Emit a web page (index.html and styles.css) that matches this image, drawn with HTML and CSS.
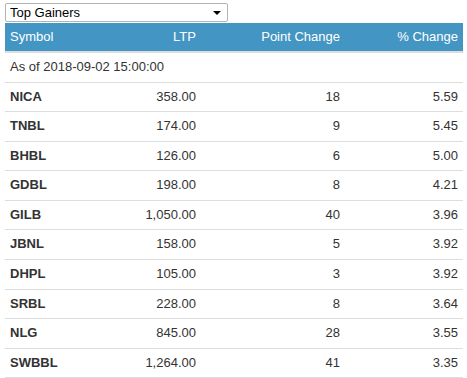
FILE: index.html
```html
<!DOCTYPE html>
<html lang="en">
<head>
  <meta charset="UTF-8" />
  <title>Top Gainers</title>
  <link rel="stylesheet" href="styles.css">
</head>
<body>
  <div class="market-box">
    <div class="select-wrap">
      <select class="market-select">
        <option>Top Gainers</option>
        <option>Top Losers</option>
        <option>Top Turnover</option>
      </select>
    </div>

    <table class="market-table">
      <thead>
        <tr>
          <th class="col-symbol">Symbol</th>
          <th class="col-ltp num">LTP</th>
          <th class="col-point num">Point Change</th>
          <th class="col-pct num">% Change</th>
        </tr>
      </thead>
      <tbody>
        <tr class="as-of">
          <td colspan="4">As of 2018-09-02 15:00:00</td>
        </tr>
        <tr><td class="sym">NICA</td><td class="num">358.00</td><td class="num">18</td><td class="num">5.59</td></tr>
        <tr><td class="sym">TNBL</td><td class="num">174.00</td><td class="num">9</td><td class="num">5.45</td></tr>
        <tr><td class="sym">BHBL</td><td class="num">126.00</td><td class="num">6</td><td class="num">5.00</td></tr>
        <tr><td class="sym">GDBL</td><td class="num">198.00</td><td class="num">8</td><td class="num">4.21</td></tr>
        <tr><td class="sym">GILB</td><td class="num">1,050.00</td><td class="num">40</td><td class="num">3.96</td></tr>
        <tr><td class="sym">JBNL</td><td class="num">158.00</td><td class="num">5</td><td class="num">3.92</td></tr>
        <tr><td class="sym">DHPL</td><td class="num">105.00</td><td class="num">3</td><td class="num">3.92</td></tr>
        <tr><td class="sym">SRBL</td><td class="num">228.00</td><td class="num">8</td><td class="num">3.64</td></tr>
        <tr><td class="sym">NLG</td><td class="num">845.00</td><td class="num">28</td><td class="num">3.55</td></tr>
        <tr><td class="sym">SWBBL</td><td class="num">1,264.00</td><td class="num">41</td><td class="num">3.35</td></tr>
      </tbody>
    </table>
  </div>
</body>
</html>
```

FILE: styles.css
```css
body {
  margin: 0;
  padding: 0;
  background-color: #fff;
  color: #333;
  font-family: "Liberation Sans", Arial, sans-serif;
  font-size: 13px;
  line-height: 1.42857;
}

.market-box {
  width: 458px;
  padding: 3px 0 0 5px;
}

.select-wrap {
  position: relative;
  width: 223px;
  margin-bottom: 1px;
}

.market-select {
  display: block;
  width: 223px;
  height: 19px;
  padding: 0 4px;
  font-family: "Liberation Sans", Arial, sans-serif;
  font-size: 13px;
  color: #000;
  background-color: #fff;
  border: 1px solid #b4b4b4;
  border-radius: 2px;
  -webkit-appearance: none;
  appearance: none;
}

.select-wrap::after {
  content: "";
  position: absolute;
  right: 7px;
  top: 8px;
  border-left: 4px solid transparent;
  border-right: 4px solid transparent;
  border-top: 4px solid #000;
  pointer-events: none;
}

.market-table {
  width: 458px;
  table-layout: fixed;
  border-collapse: separate;
  border-spacing: 0;
}

.market-table th,
.market-table td {
  padding: 5px;
  text-align: left;
  vertical-align: top;
}

.market-table th {
  line-height: 18px;
  background-color: #4396c3;
  color: #fff;
  font-weight: normal;
  border-bottom: 2px solid #ddd;
}

.market-table td {
  border-top: 1px solid #ddd;
}

.market-table tr.as-of td {
  border-top: 0;
}

.market-table tbody tr:last-child td {
  border-bottom: 1px solid #ddd;
}

.market-table .num {
  text-align: right;
}

.market-table .sym {
  font-weight: bold;
}

.col-symbol {
  width: 88px;
}

.col-ltp {
  width: 88px;
}

.col-point {
  width: 134px;
}

.col-pct {
  width: 108px;
}
```
